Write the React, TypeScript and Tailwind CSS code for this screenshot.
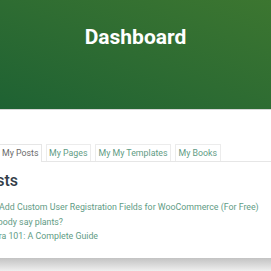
import React from 'react';

const tabs = ['My Pages', 'My My Templates', 'My Books'];

const posts = [
  'How to Add Custom User Registration Fields for WooCommerce (For Free)',
  'Did anybody say plants?',
  'Monstera 101: A Complete Guide',
];

const App: React.FC = () => {
  return (
    <div className="w-[271px] h-[271px] overflow-hidden bg-[#efefef] flex flex-col font-['Roboto',sans-serif]">
      {/* Header */}
      <div className="h-[110px] shrink-0 bg-gradient-to-tr from-[#1e6233] to-[#3c7630] flex justify-center pt-[23px] border-b border-[#d6d6d6]">
        <h1 className="text-[21px] leading-[28px] font-bold text-white">Dashboard</h1>
      </div>

      {/* Content card */}
      <div className="h-[148px] shrink-0 bg-white whitespace-nowrap">
        <div className="mt-[34px] flex items-end gap-[4px] border-b border-[#e6e6e6] -ml-[7px]">
          <div className="border border-b-0 border-[#e6e6e6] bg-white pl-[8px] pr-[2px] text-[8.8px] leading-[16px] text-[#6b6b6b] -mb-px pb-px">
            My Posts
          </div>
          {tabs.map(t => (
            <div key={t} className="border border-b-0 border-[#ececec] px-[2.5px] text-[8.8px] leading-[16px] text-[#5f9c85]">
              {t}
            </div>
          ))}
        </div>

        <h2 className="-ml-[23px] mt-[9px] text-[16px] leading-[20px] font-medium text-[#333d48]">Posts</h2>

        <ul className="-ml-[31px] mt-[9px]">
          {posts.map(p => (
            <li key={p} className="text-[8.8px] leading-[14.7px] text-[#5f9c85]">{p}</li>
          ))}
        </ul>
      </div>

      {/* Shadow below the card */}
      <div className="flex-1 bg-gradient-to-b from-[#c3c3c3] to-[#efefef]" />
    </div>
  );
};

export default App;
